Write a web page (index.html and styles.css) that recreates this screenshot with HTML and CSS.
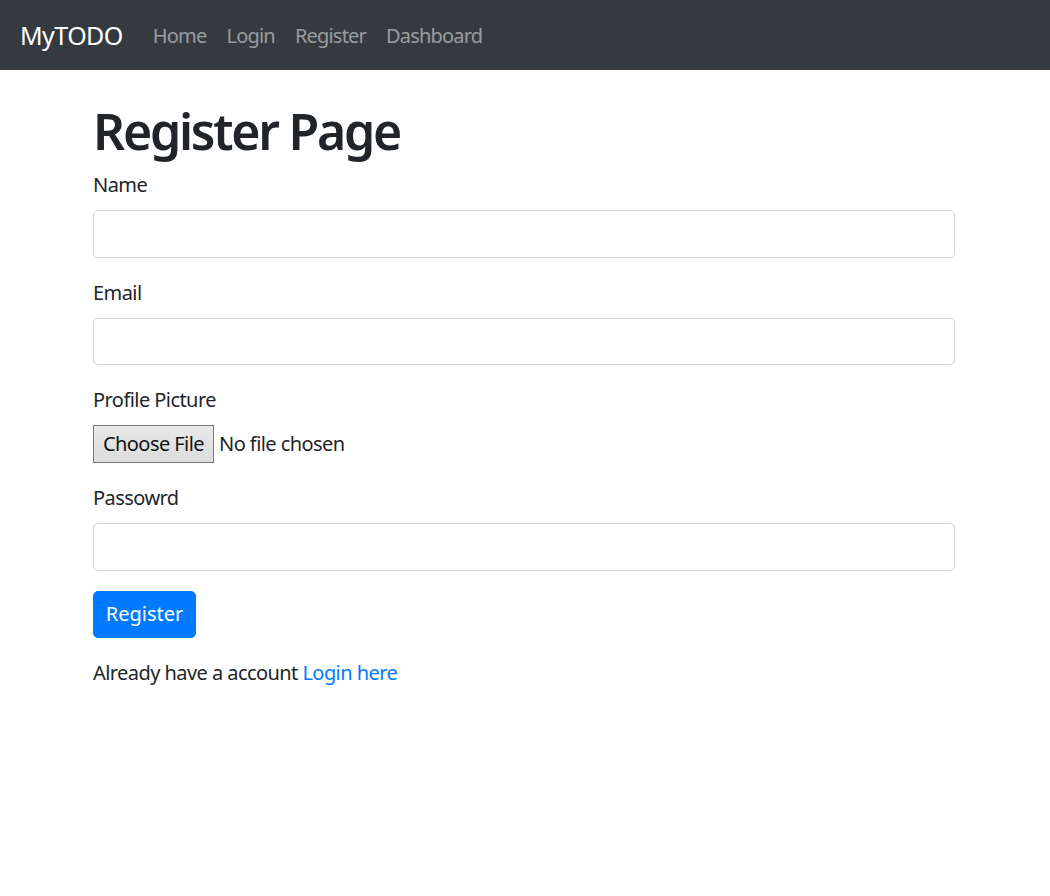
FILE: index.html
```html
<!DOCTYPE html>
<html lang="en">
<head>
<meta charset="utf-8">
<title>MyTODO - Register</title>
<link rel="stylesheet" href="styles.css">
</head>
<body>
<nav class="navbar">
  <a class="brand" href="#">MyTODO</a>
  <ul class="nav">
    <li><a class="nav-link" href="#">Home</a></li>
    <li><a class="nav-link" href="#">Login</a></li>
    <li><a class="nav-link" href="#">Register</a></li>
    <li><a class="nav-link" href="#">Dashboard</a></li>
  </ul>
</nav>
<main class="container">
  <h1 class="title">Register Page</h1>
  <form class="form">
    <div class="form-group">
      <label class="label">Name</label>
      <input class="form-control" type="text">
    </div>
    <div class="form-group">
      <label class="label">Email</label>
      <input class="form-control" type="email">
    </div>
    <div class="form-group">
      <label class="label">Profile Picture</label>
      <div class="file-input">
        <span class="file-btn">Choose File</span>
        <span class="file-text">No file chosen</span>
      </div>
    </div>
    <div class="form-group">
      <label class="label">Passowrd</label>
      <input class="form-control" type="password">
    </div>
    <button class="btn-primary" type="button">Register</button>
  </form>
  <p class="footer-text">Already have a account <a class="link" href="#">Login here</a></p>
</main>
</body>
</html>
```
FILE: styles.css
```css
* { box-sizing: border-box; }
html, body { margin: 0; padding: 0; }
body {
  font-family: "Noto Sans", "Open Sans", sans-serif;
  font-size: 20px;
  line-height: 1.5;
  letter-spacing: -0.028em;
  color: #212529;
  background: #fff;
}
.navbar {
  display: flex;
  align-items: center;
  height: 70px;
  padding: 11px 20px 9px;
  background: #343a40;
}
.brand {
  font-size: 25px;
  line-height: 1.5;
  color: #fff;
  text-decoration: none;
  margin-right: 20px;
}
.nav {
  display: flex;
  list-style: none;
  margin: 0;
  padding: 0;
}
.nav-link {
  display: block;
  padding: 10px 10px;
  letter-spacing: -0.04em;
  color: rgba(255,255,255,.5);
  text-decoration: none;
}
.container {
  width: 900px;
  margin: 31px auto 0;
  padding: 0 20px 0 18px;
}
.title {
  font-size: 50px;
  font-weight: 600;
  line-height: 1.2;
  letter-spacing: -0.045em;
  margin: 0 0 9px;
}
.form-group { margin-bottom: 20px; }
.label {
  display: inline-block;
  margin-bottom: 10px;
}
.form-control {
  display: block;
  width: 100%;
  height: 47.5px;
  padding: 7.5px 15px;
  font: inherit;
  color: #495057;
  background: #fff;
  border: 1px solid #ced4da;
  border-radius: 5px;
}
.file-input {
  display: flex;
  align-items: center;
  height: 38px;
}
.file-btn {
  display: inline-flex;
  align-items: center;
  height: 38px;
  width: 121px;
  justify-content: center;
  background: linear-gradient(#e9e9e9, #dcdcdc);
  border: 1px solid #767676;
  color: #111;
  margin-right: 5px;
}
.btn-primary {
  font: inherit;
  height: 47.5px;
  width: 103px;
  padding: 7.5px 0;
  color: #fff;
  background: #007bff;
  border: 1px solid #007bff;
  border-radius: 5px;
}
.footer-text { margin: 20px 0 0; }
.link { color: #007bff; text-decoration: none; }
```
